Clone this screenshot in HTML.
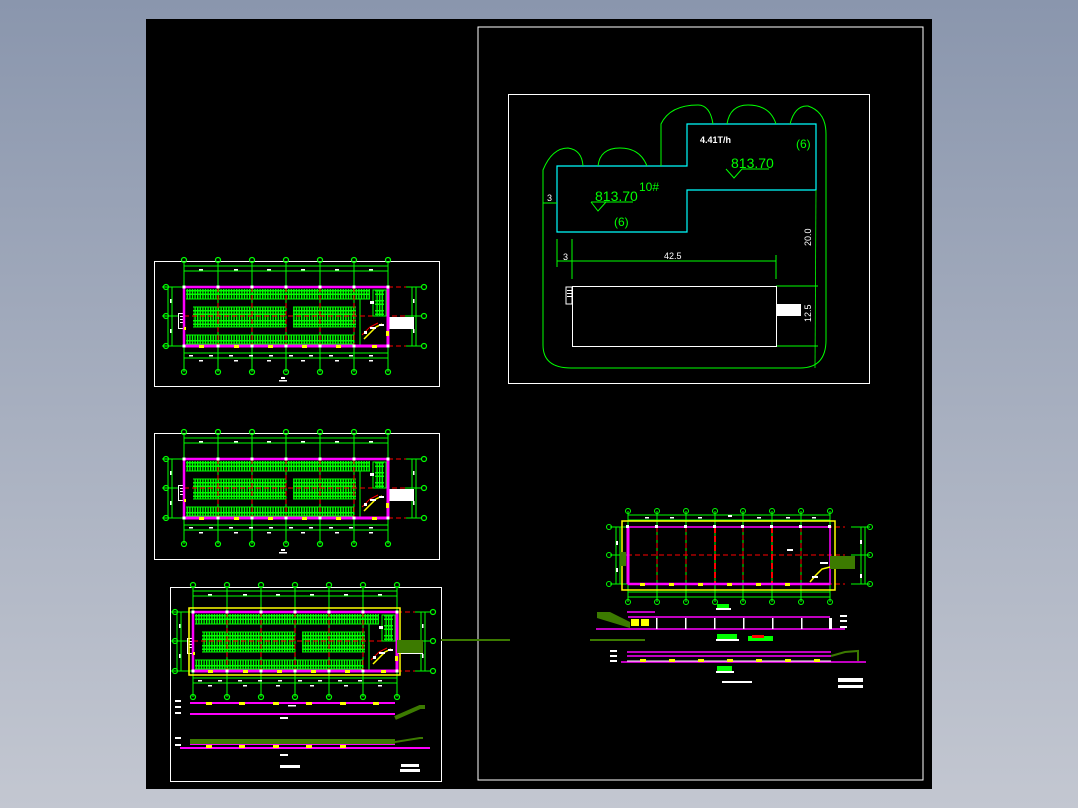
<!DOCTYPE html>
<html><head><meta charset="utf-8"><style>
html,body{margin:0;padding:0;width:1078px;height:808px;overflow:hidden;background:linear-gradient(#8a96ad,#c3c7d1);}
svg{position:absolute;left:0;top:0}
text{font-family:"Liberation Sans",sans-serif}
</style></head><body>
<svg width="1078" height="808" viewBox="0 0 1078 808" xmlns="http://www.w3.org/2000/svg">
<defs>
<pattern id="st" width="2.6" height="10" patternUnits="userSpaceOnUse">
<rect x="0" y="0" width="1.4" height="10" fill="#0f0"/>
<rect x="0" y="3" width="2.6" height="1.5" fill="#0f0"/>
<rect x="0" y="6.5" width="2.6" height="1.5" fill="#0f0"/>
</pattern>
<g id="plan">
<g stroke="#0f0" stroke-width="1" fill="none">
<line x1="0" y1="-21" x2="204" y2="-21"/><line x1="0" y1="-16" x2="204" y2="-16"/>
<line x1="0" y1="66" x2="204" y2="66"/><line x1="0" y1="71" x2="204" y2="71"/>
<line x1="-16" y1="0" x2="-16" y2="59"/><line x1="-12" y1="0" x2="-12" y2="59"/>
<line x1="228" y1="0" x2="228" y2="59"/><line x1="232" y1="0" x2="232" y2="59"/>
<line x1="-22" y1="0" x2="0" y2="0"/><line x1="-22" y1="29" x2="0" y2="29"/><line x1="-22" y1="59" x2="0" y2="59"/>
<line x1="220" y1="0" x2="238" y2="0"/><line x1="220" y1="29" x2="238" y2="29"/><line x1="220" y1="59" x2="238" y2="59"/>
<line x1="0" y1="-26" x2="0" y2="85"/><line x1="34" y1="-26" x2="34" y2="85"/><line x1="68" y1="-26" x2="68" y2="85"/><line x1="102" y1="-26" x2="102" y2="85"/><line x1="136" y1="-26" x2="136" y2="85"/><line x1="170" y1="-26" x2="170" y2="85"/><line x1="204" y1="-26" x2="204" y2="85"/>
<g stroke-width="1.2">
<circle cx="0" cy="-27" r="2.5"/><circle cx="34" cy="-27" r="2.5"/><circle cx="68" cy="-27" r="2.5"/><circle cx="102" cy="-27" r="2.5"/><circle cx="136" cy="-27" r="2.5"/><circle cx="170" cy="-27" r="2.5"/><circle cx="204" cy="-27" r="2.5"/>
<circle cx="0" cy="85" r="2.5"/><circle cx="34" cy="85" r="2.5"/><circle cx="68" cy="85" r="2.5"/><circle cx="102" cy="85" r="2.5"/><circle cx="136" cy="85" r="2.5"/><circle cx="170" cy="85" r="2.5"/><circle cx="204" cy="85" r="2.5"/>
<circle cx="-18" cy="0" r="2.5"/><circle cx="-18" cy="29" r="2.5"/><circle cx="-18" cy="59" r="2.5"/>
<circle cx="240" cy="0" r="2.5"/><circle cx="240" cy="29" r="2.5"/><circle cx="240" cy="59" r="2.5"/>
</g>
</g>
<g fill="#fff">
<rect x="15" y="-18" width="4" height="1.5"/><rect x="50" y="-18" width="4" height="1.5"/><rect x="83" y="-18" width="4" height="1.5"/><rect x="117" y="-18" width="4" height="1.5"/><rect x="151" y="-18" width="4" height="1.5"/><rect x="185" y="-18" width="4" height="1.5"/>
<rect x="5" y="68" width="4" height="1.5"/><rect x="25" y="68" width="4" height="1.5"/><rect x="45" y="68" width="4" height="1.5"/><rect x="65" y="68" width="4" height="1.5"/><rect x="85" y="68" width="4" height="1.5"/><rect x="105" y="68" width="4" height="1.5"/><rect x="125" y="68" width="4" height="1.5"/><rect x="145" y="68" width="4" height="1.5"/><rect x="165" y="68" width="4" height="1.5"/><rect x="185" y="68" width="4" height="1.5"/>
<rect x="15" y="73" width="4" height="1.5"/><rect x="50" y="73" width="4" height="1.5"/><rect x="83" y="73" width="4" height="1.5"/><rect x="117" y="73" width="4" height="1.5"/><rect x="151" y="73" width="4" height="1.5"/><rect x="185" y="73" width="4" height="1.5"/>
<rect x="-14" y="12" width="1.5" height="4"/><rect x="-14" y="42" width="1.5" height="4"/><rect x="229" y="12" width="1.5" height="4"/><rect x="229" y="42" width="1.5" height="4"/>
<rect x="-6" y="26" width="6" height="16"/>
</g>
<rect x="-5" y="27" width="4" height="14" fill="#000"/>
<g fill="#fff"><rect x="-4" y="29" width="3" height="1"/><rect x="-4" y="32" width="3" height="1"/><rect x="-4" y="35" width="3" height="1"/></g>
<rect x="2" y="2" width="184" height="10" fill="url(#st)"/>
<rect x="9" y="20" width="93" height="10" fill="url(#st)"/>
<rect x="9" y="30" width="93" height="10" fill="url(#st)"/>
<rect x="109" y="20" width="63" height="10" fill="url(#st)"/>
<rect x="109" y="30" width="63" height="10" fill="url(#st)"/>
<rect x="2" y="48" width="168" height="10" fill="url(#st)"/>
<g stroke="#0f0" stroke-width="1"><line x1="2" y1="12" x2="186" y2="12"/><line x1="9" y1="20" x2="102" y2="20"/><line x1="109" y1="20" x2="172" y2="20"/><line x1="9" y1="40" x2="102" y2="40"/><line x1="109" y1="40" x2="172" y2="40"/><line x1="2" y1="48" x2="170" y2="48"/><line x1="176" y1="12" x2="176" y2="58"/></g>
<g stroke="#f00" stroke-width="1" stroke-dasharray="5,3">
<line x1="34" y1="0" x2="34" y2="59"/><line x1="68" y1="0" x2="68" y2="59"/><line x1="102" y1="0" x2="102" y2="59"/><line x1="136" y1="0" x2="136" y2="59"/><line x1="170" y1="0" x2="170" y2="59"/>
<line x1="0" y1="29" x2="222" y2="29"/><line x1="204" y1="0" x2="222" y2="0"/><line x1="204" y1="59" x2="222" y2="59"/>
</g>
<rect x="191" y="3" width="9" height="26" fill="url(#st)"/>
<rect x="189" y="3" width="13" height="26" fill="none" stroke="#0f0"/>
<rect x="205" y="30" width="25" height="12" fill="#fff"/>
<path d="M180 52 L186 46 L192 40 L198 37" stroke="#ff0" stroke-width="1.5" fill="none"/>
<path d="M178 48 L186 40 L194 36" stroke="#f00" stroke-width="1" fill="none"/>
<g fill="#fff"><rect x="186" y="40" width="6" height="2"/><rect x="180" y="44" width="3" height="3"/><rect x="195" y="37" width="5" height="2"/><rect x="186" y="14" width="4" height="3"/></g>
<rect x="0" y="0" width="204" height="59" fill="none" stroke="#f0f" stroke-width="2.5"/>
<line x1="0" y1="59" x2="204" y2="59" stroke="#f0f" stroke-width="3"/>
<line x1="204" y1="0" x2="204" y2="59" stroke="#f0f" stroke-width="3"/>
<g fill="#ff0"><rect x="15" y="58" width="5" height="3"/><rect x="50" y="58" width="5" height="3"/><rect x="84" y="58" width="5" height="3"/><rect x="118" y="58" width="5" height="3"/><rect x="152" y="58" width="5" height="3"/><rect x="188" y="58" width="5" height="3"/><rect x="202" y="44" width="3" height="5"/><rect x="0" y="40" width="2" height="3"/></g>
<g fill="#fff"><rect x="-1.5" y="-1.5" width="3" height="3"/><rect x="32.5" y="-1.5" width="3" height="3"/><rect x="66.5" y="-1.5" width="3" height="3"/><rect x="100.5" y="-1.5" width="3" height="3"/><rect x="134.5" y="-1.5" width="3" height="3"/><rect x="168.5" y="-1.5" width="3" height="3"/><rect x="202.5" y="-1.5" width="3" height="3"/>
<rect x="-1.5" y="57.5" width="3" height="3"/><rect x="32.5" y="57.5" width="3" height="3"/><rect x="66.5" y="57.5" width="3" height="3"/><rect x="100.5" y="57.5" width="3" height="3"/><rect x="134.5" y="57.5" width="3" height="3"/><rect x="168.5" y="57.5" width="3" height="3"/><rect x="202.5" y="57.5" width="3" height="3"/>
<rect x="95" y="93" width="8" height="1.5"/><rect x="97" y="90" width="4" height="2"/></g>
</g>
</defs>
<rect x="146" y="19" width="786" height="770" fill="#000"/>
<rect x="478" y="27" width="445" height="753" fill="none" stroke="#fff" stroke-width="1"/>
<rect x="154.5" y="261.5" width="285" height="125" fill="none" stroke="#fff"/>
<rect x="154.5" y="433.5" width="285" height="126" fill="none" stroke="#fff"/>
<rect x="170.5" y="587.5" width="271" height="194" fill="none" stroke="#fff"/>
<use href="#plan" transform="translate(184,287)"/>
<use href="#plan" transform="translate(184,459)"/>
<use href="#plan" transform="translate(193,612)"/>
<rect x="189" y="608" width="211" height="67" fill="none" stroke="#ff0" stroke-width="1.5"/>
<rect x="397" y="640" width="26" height="13" fill="#3c7a00"/>
<line x1="441" y1="640" x2="510" y2="640" stroke="#3c7a00" stroke-width="2"/>
<g stroke="#f0f" stroke-width="2" fill="none">
<line x1="190" y1="703" x2="395" y2="703"/><line x1="190" y1="714" x2="395" y2="714"/>
<line x1="190" y1="744" x2="395" y2="744"/><line x1="180" y1="748" x2="430" y2="748"/>
</g>
<rect x="190" y="739" width="205" height="5" fill="#3c7a00"/>
<path d="M395 718 L420 707 L425 707" stroke="#3c7a00" stroke-width="4" fill="none"/>
<path d="M395 742 L420 738 L423 738" stroke="#3c7a00" stroke-width="2" fill="none"/>
<g fill="#ff0"><rect x="206" y="702" width="6" height="3"/><rect x="239" y="702" width="6" height="3"/><rect x="273" y="702" width="6" height="3"/><rect x="306" y="702" width="6" height="3"/><rect x="340" y="702" width="6" height="3"/><rect x="373" y="702" width="6" height="3"/>
<rect x="206" y="745" width="6" height="3"/><rect x="239" y="745" width="6" height="3"/><rect x="273" y="745" width="6" height="3"/><rect x="306" y="745" width="6" height="3"/><rect x="340" y="745" width="6" height="3"/></g>
<g fill="#fff"><rect x="175" y="700" width="6" height="2"/><rect x="175" y="706" width="6" height="2"/><rect x="175" y="712" width="6" height="2"/><rect x="175" y="737" width="6" height="2"/><rect x="175" y="744" width="6" height="2"/><rect x="280" y="765" width="20" height="3"/><rect x="401" y="764" width="18" height="3"/><rect x="400" y="769" width="20" height="3"/><rect x="280" y="717" width="8" height="2"/><rect x="280" y="754" width="8" height="2"/></g>
<rect x="508.5" y="94.5" width="361" height="289" fill="none" stroke="#fff"/>
<path d="M557 166 L687 166 L687 124 L816 124 L816 190 L687 190 L687 232 L557 232 Z" fill="none" stroke="#0ff" stroke-width="1.2"/>
<g stroke="#0f0" stroke-width="1" fill="none">
<path d="M543 345 L543 170 Q552 148 568 148 Q582 150 583 166"/>
<path d="M598 166 Q600 148 620 148 Q640 148 647 166"/>
<path d="M661 166 L661 124 Q670 105 698 105 Q710 105 713 124"/>
<path d="M727 124 Q730 105 748 105 Q770 105 776 124"/>
<path d="M790 124 Q795 105 808 106 Q826 112 826 134 L826 340 Q826 368 800 368 L571 368 Q543 368 543 345"/>
<line x1="816" y1="190" x2="815" y2="368" stroke-width="0.8"/>
<line x1="776" y1="286" x2="818" y2="286"/><line x1="776" y1="346" x2="818" y2="346"/>
<line x1="557" y1="261" x2="776" y2="261"/><line x1="557" y1="239" x2="557" y2="267"/><line x1="572" y1="239" x2="572" y2="279"/><line x1="776" y1="255" x2="776" y2="279"/>
<line x1="543" y1="203" x2="557" y2="203"/>
<line x1="591" y1="202" x2="633" y2="202"/><path d="M591 202 L598 211 L606 202"/>
<line x1="742" y1="169" x2="769" y2="169"/><path d="M726 169 L734 178 L742 169"/>
</g>
<rect x="572.5" y="286.5" width="204" height="60" fill="none" stroke="#fff"/>
<rect x="776" y="304" width="25" height="12" fill="#fff"/>
<rect x="566" y="287" width="6" height="17" fill="none" stroke="#fff"/>
<g fill="#fff"><rect x="567" y="290" width="5" height="1"/><rect x="567" y="293" width="5" height="1"/><rect x="567" y="296" width="5" height="1"/></g>
<g font-size="14" fill="#0f0">
<text x="595" y="201">813.70</text>
<text x="731" y="168">813.70</text>
<text x="639" y="191" font-size="12">10#</text>
<text x="614" y="226" font-size="12">(6)</text>
<text x="796" y="148" font-size="12">(6)</text>
</g>
<g font-size="9" fill="#fff">
<text x="700" y="143" font-weight="bold">4.41T/h</text>
<text x="547" y="201">3</text>
<text x="563" y="260">3</text>
<text x="664" y="259">42.5</text>
<text transform="translate(811,246) rotate(-90)">20.0</text>
<text transform="translate(811,322) rotate(-90)">12.5</text>
</g>
<g stroke="#0f0" stroke-width="1" fill="none">
<line x1="628" y1="515" x2="830" y2="515"/><line x1="628" y1="520" x2="830" y2="520"/>
<line x1="628" y1="592" x2="830" y2="592"/><line x1="628" y1="597" x2="830" y2="597"/>
<line x1="616" y1="527" x2="616" y2="584"/><line x1="620" y1="527" x2="620" y2="584"/>
<line x1="865" y1="527" x2="865" y2="584"/><line x1="861" y1="527" x2="861" y2="584"/>
<line x1="610" y1="527" x2="628" y2="527"/><line x1="610" y1="555" x2="628" y2="555"/><line x1="610" y1="584" x2="628" y2="584"/>
<line x1="851" y1="527" x2="870" y2="527"/><line x1="851" y1="555" x2="870" y2="555"/><line x1="851" y1="584" x2="870" y2="584"/>
<line x1="628" y1="511" x2="628" y2="602"/><line x1="657" y1="511" x2="657" y2="602"/><line x1="686" y1="511" x2="686" y2="602"/><line x1="715" y1="511" x2="715" y2="602"/><line x1="743" y1="511" x2="743" y2="602"/><line x1="772" y1="511" x2="772" y2="602"/><line x1="801" y1="511" x2="801" y2="602"/><line x1="830" y1="511" x2="830" y2="602"/>
<circle cx="628" cy="511" r="2.5"/><circle cx="657" cy="511" r="2.5"/><circle cx="686" cy="511" r="2.5"/><circle cx="715" cy="511" r="2.5"/><circle cx="743" cy="511" r="2.5"/><circle cx="772" cy="511" r="2.5"/><circle cx="801" cy="511" r="2.5"/><circle cx="830" cy="511" r="2.5"/>
<circle cx="628" cy="602" r="2.5"/><circle cx="657" cy="602" r="2.5"/><circle cx="686" cy="602" r="2.5"/><circle cx="715" cy="602" r="2.5"/><circle cx="743" cy="602" r="2.5"/><circle cx="772" cy="602" r="2.5"/><circle cx="801" cy="602" r="2.5"/><circle cx="830" cy="602" r="2.5"/>
<circle cx="609" cy="527" r="2.5"/><circle cx="609" cy="555" r="2.5"/><circle cx="609" cy="584" r="2.5"/>
<circle cx="870" cy="527" r="2.5"/><circle cx="870" cy="555" r="2.5"/><circle cx="870" cy="584" r="2.5"/>
</g>
<g stroke="#f00" stroke-width="1" stroke-dasharray="5,3">
<line x1="627" y1="527" x2="845" y2="527"/><line x1="627" y1="555" x2="845" y2="555"/><line x1="627" y1="584" x2="845" y2="584"/>
<line x1="657" y1="527" x2="657" y2="584"/><line x1="686" y1="527" x2="686" y2="584"/><line x1="743" y1="527" x2="743" y2="584"/><line x1="801" y1="527" x2="801" y2="584"/>
</g>
<g stroke="#f00" stroke-width="2" stroke-dasharray="6,3"><line x1="715" y1="527" x2="715" y2="584"/><line x1="772" y1="527" x2="772" y2="584"/></g>
<rect x="622" y="521" width="213" height="69" fill="none" stroke="#ff0" stroke-width="1.5"/>
<rect x="628" y="527" width="202" height="57" fill="none" stroke="#f0f" stroke-width="1.5"/>
<line x1="628" y1="527" x2="628" y2="584" stroke="#f0f" stroke-width="3"/>
<line x1="628" y1="584" x2="830" y2="584" stroke="#f0f" stroke-width="2.5"/>
<rect x="830" y="556" width="25" height="13" fill="#3c7a00"/>
<rect x="620" y="552" width="6" height="14" fill="#3c7a00"/>
<path d="M810 582 L816 575 L822 569 L830 567" stroke="#ff0" stroke-width="1.5" fill="none"/>
<g fill="#fff"><rect x="626" y="525" width="3" height="3"/><rect x="655" y="525" width="3" height="3"/><rect x="684" y="525" width="3" height="3"/><rect x="713" y="525" width="3" height="3"/><rect x="741" y="525" width="3" height="3"/><rect x="770" y="525" width="3" height="3"/><rect x="799" y="525" width="3" height="3"/><rect x="828" y="525" width="3" height="3"/>
<rect x="645" y="517" width="4" height="1.5"/><rect x="670" y="517" width="4" height="1.5"/><rect x="698" y="517" width="4" height="1.5"/><rect x="728" y="515" width="4" height="2"/><rect x="757" y="517" width="4" height="1.5"/><rect x="786" y="517" width="4" height="1.5"/><rect x="812" y="517" width="4" height="1.5"/>
<rect x="787" y="549" width="6" height="2"/><rect x="616" y="541" width="2" height="4"/><rect x="616" y="568" width="2" height="4"/><rect x="860" y="540" width="2" height="4"/><rect x="860" y="574" width="2" height="4"/>
<rect x="820" y="562" width="8" height="2"/><rect x="812" y="576" width="6" height="2"/></g>
<g fill="#ff0"><rect x="640" y="583" width="5" height="3"/><rect x="669" y="583" width="5" height="3"/><rect x="698" y="583" width="5" height="3"/><rect x="727" y="583" width="5" height="3"/><rect x="756" y="583" width="5" height="3"/><rect x="785" y="583" width="5" height="3"/></g>
<rect x="717" y="604" width="12" height="4" fill="#0f0"/><rect x="716" y="608" width="15" height="2" fill="#fff"/>
<g stroke="#f0f" stroke-width="1.5" fill="none"><line x1="628" y1="617" x2="830" y2="617"/><line x1="596" y1="629" x2="845" y2="629"/><line x1="627" y1="612" x2="655" y2="612"/></g>
<path d="M597 612 L610 612 L630 622 L630 628 L597 618 Z" fill="#3c7a00"/>
<rect x="631" y="619" width="8" height="7" fill="#ff0"/><rect x="641" y="619" width="8" height="7" fill="#ff0"/>
<g fill="#fff"><rect x="656" y="618" width="1.5" height="11"/><rect x="685" y="618" width="1.5" height="11"/><rect x="714" y="618" width="1.5" height="11"/><rect x="743" y="618" width="1.5" height="11"/><rect x="772" y="618" width="1.5" height="11"/><rect x="801" y="618" width="1.5" height="11"/><rect x="829" y="618" width="3" height="11"/><rect x="840" y="615" width="7" height="2"/><rect x="840" y="620" width="7" height="2"/><rect x="840" y="626" width="7" height="2"/></g>
<line x1="590" y1="640" x2="645" y2="640" stroke="#3c7a00" stroke-width="2"/>
<rect x="717" y="634" width="20" height="5" fill="#0f0"/><rect x="716" y="639" width="23" height="2" fill="#fff"/>
<rect x="748" y="636" width="25" height="5" fill="#0f0"/><rect x="752" y="635" width="12" height="3" fill="#f00"/>
<g stroke="#f0f" stroke-width="1.5" fill="none"><line x1="627" y1="652" x2="831" y2="652"/><line x1="627" y1="656" x2="831" y2="656"/><line x1="621" y1="662" x2="866" y2="662"/></g>
<line x1="627" y1="661" x2="831" y2="661" stroke="#fff"/>
<path d="M831 656 L845 652 L858 651 L858 661" stroke="#3c7a00" stroke-width="2" fill="none"/>
<g fill="#ff0"><rect x="640" y="659" width="6" height="3"/><rect x="669" y="659" width="6" height="3"/><rect x="698" y="659" width="6" height="3"/><rect x="727" y="659" width="6" height="3"/><rect x="756" y="659" width="6" height="3"/><rect x="785" y="659" width="6" height="3"/><rect x="814" y="659" width="6" height="3"/></g>
<g fill="#fff"><rect x="610" y="650" width="7" height="2"/><rect x="610" y="655" width="7" height="2"/><rect x="610" y="660" width="7" height="2"/>
<rect x="722" y="681" width="30" height="2"/><rect x="838" y="678" width="25" height="4"/><rect x="838" y="685" width="25" height="3"/></g>
<rect x="717" y="666" width="15" height="5" fill="#0f0"/><rect x="716" y="671" width="18" height="2" fill="#fff"/>
</svg>
</body></html>
